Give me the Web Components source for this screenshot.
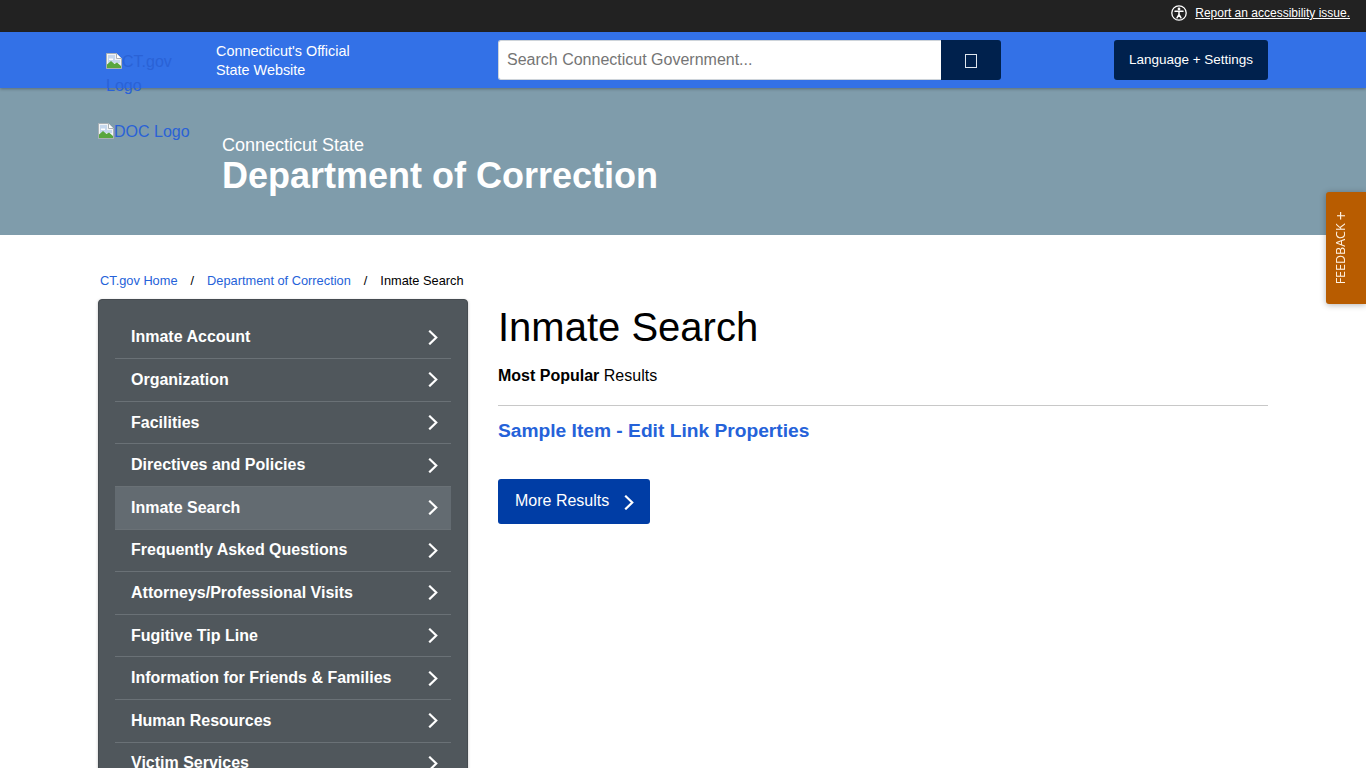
<!DOCTYPE html>
<html lang="en">
<head>
<meta charset="utf-8">
<title>Inmate Search</title>
<style>
  html, body { margin: 0; padding: 0; background: #fff; overflow: hidden; height: 768px; }
  body { font-family: 'Liberation Sans', Arial, sans-serif; color: #000; }
</style>
</head>
<body>
<gov-topbar></gov-topbar>
<gov-header></gov-header>
<agency-hero></agency-hero>
<page-body>
  <crumb-trail slot="crumbs"></crumb-trail>
  <side-nav slot="side">
    <nav-item>Inmate Account</nav-item>
    <nav-item>Organization</nav-item>
    <nav-item>Facilities</nav-item>
    <nav-item>Directives and Policies</nav-item>
    <nav-item active>Inmate Search</nav-item>
    <nav-item>Frequently Asked Questions</nav-item>
    <nav-item>Attorneys/Professional Visits</nav-item>
    <nav-item>Fugitive Tip Line</nav-item>
    <nav-item>Information for Friends &amp; Families</nav-item>
    <nav-item>Human Resources</nav-item>
    <nav-item>Victim Services</nav-item>
  </side-nav>
  <result-panel></result-panel>
</page-body>
<feedback-tab></feedback-tab>

<script>
// broken image placeholder, same one for both logos
const brokenImg = `<svg width="16" height="16" viewBox="0 0 16 16" style="vertical-align:-2px">
  <path d="M.5 .5h10l5 5v10H.5z" fill="#f2f4f5" stroke="#a9b0b5"/>
  <path d="M10.500 .5v5h5" fill="#fff" stroke="#a9b0b5"/>
  <path d="M2 2h7v5h5v3H2z" fill="#c6d8ee"/>
  <path d="M3 5.500h4v1.500H3z" fill="#fff"/>
  <path d="M1 15v-3.500l4-3.500 3.500 3 2.500-1.500 4 3.500V15z" fill="#58a63f"/>
</svg>`;

const chevron = (w, h) => `<svg width="${w}" height="${h}" viewBox="0 0 10 16" fill="none" stroke="#fff" stroke-width="2.300" stroke-linecap="square"><path d="M1.800 1.500 8.500 8l-6.700 6.500"/></svg>`;

class GovTopbar extends HTMLElement {
  constructor() {
    super();
    this.attachShadow({mode: 'open'}).innerHTML = `
      <style>
        :host { display: flex; justify-content: flex-end; align-items: center; gap: 8px; height: 32px; padding: 0 16px 6px 0; box-sizing: border-box; background: #222; font-size: 12px; }
        a { color: #fff; text-decoration: underline; }
        svg { display: block; }
      </style>
      <svg width="16" height="16" viewBox="0 0 16 16" fill="none" stroke="#fff">
        <circle cx="8" cy="8" r="7.200" stroke-width="1.300"/>
        <circle cx="8" cy="4" r="1.400" fill="#fff" stroke="none"/>
        <path d="M4 6.200h8M8 6.200v3.300M8 9.500l-2 3.400M8 9.500l2 3.400" stroke-width="1.500" stroke-linecap="round"/>
      </svg>
      <a href="#">Report an accessibility issue.</a>`;
  }
}
customElements.define('gov-topbar', GovTopbar);

class GovHeader extends HTMLElement {
  constructor() {
    super();
    this.attachShadow({mode: 'open'}).innerHTML = `
      <style>
        :host { display: block; position: relative; z-index: 2; height: 56px; background: #3371e7; box-shadow: 0 1px 3px rgba(0,0,0,.3); }
        .row { display: flex; height: 100%; padding: 8px 98px 0 106px; box-sizing: border-box; }
        .logo { width: 110px; flex: none; font-size: 16px; line-height: 24px; padding-top: 10px; color: #2a62d6; box-sizing: border-box; }
        .logo span { display: block; width: 76px; }
        .tag { width: 282px; flex: none; color: #fff; font-size: 14.400px; line-height: 19px; padding-top: 2px; }
        .search { display: flex; width: 503px; height: 40px; flex: none; }
        input { flex: 1; min-width: 0; box-sizing: border-box; border: 1px solid #ced4da; border-right: 0; border-radius: 3px 0 0 3px; padding: 0 8px; font: 16px 'Liberation Sans', Arial, sans-serif; background: #fff; }
        input::placeholder { color: #757575; opacity: 1; }
        .go { width: 60px; flex: none; display: flex; align-items: center; justify-content: center; background: #00214d; border-radius: 0 3px 3px 0; }
        .go i { display: block; width: 10px; height: 12px; border: 1px solid #dfe6ee; margin-top: 2px; }
        .lang { margin-left: auto; width: 154px; height: 40px; display: flex; align-items: center; justify-content: center; padding-bottom: 2px; box-sizing: border-box; background: #00214d; color: #fff; font-size: 13.500px; border-radius: 3px; }
      </style>
      <div class="row">
        <div class="logo"><span>${brokenImg}CT.gov Logo</span></div>
        <div class="tag">Connecticut's Official<br>State Website</div>
        <div class="search">
          <input type="text" placeholder="Search Connecticut Government...">
          <div class="go"><i></i></div>
        </div>
        <div class="lang">Language + Settings</div>
      </div>`;
  }
}
customElements.define('gov-header', GovHeader);

class AgencyHero extends HTMLElement {
  constructor() {
    super();
    this.attachShadow({mode: 'open'}).innerHTML = `
      <style>
        :host { display: flex; height: 147px; padding-left: 98px; background: #7f9cab; box-sizing: border-box; }
        .logo { width: 124px; flex: none; padding-top: 32px; font-size: 16px; line-height: 24px; color: #2a62d6; }
        .names { padding-top: 46px; color: #fff; }
        .small { font-size: 18px; line-height: 22px; }
        .big { font-size: 36px; line-height: 40px; font-weight: 700; }
      </style>
      <div class="logo">${brokenImg}DOC Logo</div>
      <div class="names">
        <div class="small">Connecticut State</div>
        <div class="big">Department of Correction</div>
      </div>`;
  }
}
customElements.define('agency-hero', AgencyHero);

class PageBody extends HTMLElement {
  constructor() {
    super();
    this.attachShadow({mode: 'open'}).innerHTML = `
      <style>
        :host { display: block; padding: 36px 98px 0; }
        .cols { display: grid; grid-template-columns: 370px 770px; column-gap: 30px; margin-top: 9px; }
      </style>
      <slot name="crumbs"></slot>
      <div class="cols">
        <slot name="side"></slot>
        <slot></slot>
      </div>`;
  }
}
customElements.define('page-body', PageBody);

class CrumbTrail extends HTMLElement {
  constructor() {
    super();
    this.attachShadow({mode: 'open'}).innerHTML = `
      <style>
        :host { display: flex; padding-left: 2px; font-size: 12.800px; line-height: 19px; }
        a { color: #2562d9; text-decoration: none; }
        i { font-style: normal; padding: 0 13px; }
      </style>
      <a href="#">CT.gov Home</a><i>/</i><a href="#">Department of Correction</a><i>/</i><span>Inmate Search</span>`;
  }
}
customElements.define('crumb-trail', CrumbTrail);

class SideNav extends HTMLElement {
  constructor() {
    super();
    this.attachShadow({mode: 'open'}).innerHTML = `
      <style>
        :host { display: block; box-sizing: border-box; padding: 16.500px 16px 16px; background: #50575c; border: 1px solid #454b50; border-radius: 4px; box-shadow: 0 1px 3px rgba(0,0,0,.25); }
      </style>
      <slot></slot>`;
  }
}
customElements.define('side-nav', SideNav);

class NavItem extends HTMLElement {
  constructor() {
    super();
    this.attachShadow({mode: 'open'}).innerHTML = `
      <style>
        :host { display: flex; align-items: center; justify-content: space-between; box-sizing: border-box; height: 42.620px; padding: 0 13px 0 16px; border-bottom: 1px solid #6a7176; color: #fff; font-size: 16px; font-weight: 700; }
        :host([active]) { background: #636b71; }
        svg { display: block; }
      </style>
      <slot></slot>${chevron(10, 15)}`;
  }
}
customElements.define('nav-item', NavItem);

class ResultPanel extends HTMLElement {
  constructor() {
    super();
    this.attachShadow({mode: 'open'}).innerHTML = `
      <style>
        :host { display: block; }
        h1 { margin: 5px 0 0; font-size: 40px; line-height: 46px; font-weight: 400; }
        p { margin: 14px 0 0; font-size: 16px; line-height: 24px; padding-bottom: 17px; border-bottom: 1px solid #c8c8c8; }
        a.item { display: block; margin-top: 13px; color: #2562d9; font-size: 19.200px; line-height: 24px; font-weight: 700; text-decoration: none; }
        .more { display: inline-flex; align-items: center; gap: 15px; margin-top: 36px; height: 45px; padding: 0 16px 2px 17px; box-sizing: border-box; background: #003da5; border-radius: 3px; color: #fff; font-size: 16px; }
        svg { display: block; margin-top: 4px; }
      </style>
      <h1>Inmate Search</h1>
      <p><b>Most Popular</b> Results</p>
      <a class="item" href="#">Sample Item - Edit Link Properties</a>
      <div class="more">More Results ${chevron(10, 15)}</div>`;
  }
}
customElements.define('result-panel', ResultPanel);

class FeedbackTab extends HTMLElement {
  constructor() {
    super();
    this.attachShadow({mode: 'open'}).innerHTML = `
      <style>
        :host { position: fixed; top: 192px; right: 0; width: 40px; height: 112px; z-index: 5; display: flex; align-items: center; justify-content: center; padding-right: 11px; box-sizing: border-box; background: #b85c00; border-radius: 3px 0 0 3px; box-shadow: 0 1px 6px rgba(0,0,0,.3); color: #fff3e4; }
        span { writing-mode: vertical-rl; transform: rotate(180deg); font: 12.500px/1 'Open Sans', sans-serif; white-space: nowrap; }
        b { font-weight: 400; font-size: 16px; line-height: 1; }
      </style>
      <span>FEEDBACK <b>+</b></span>`;
  }
}
customElements.define('feedback-tab', FeedbackTab);
</script>
</body>
</html>
